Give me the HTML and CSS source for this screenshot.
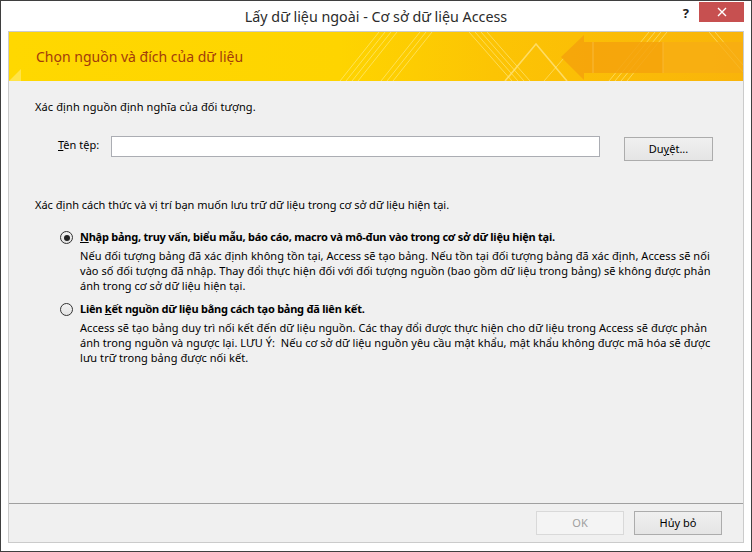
FILE: index.html
```html
<!DOCTYPE html>
<html lang="vi">
<head>
<meta charset="utf-8">
<title>Lấy dữ liệu ngoài - Cơ sở dữ liệu Access</title>
<link rel="stylesheet" href="styles.css">
</head>
<body>
<div class="window">
  <div class="titlebar">
    <div class="title">Lấy dữ liệu ngoài - Cơ sở dữ liệu Access</div>
    <div class="controls">
      <span class="help">?</span>
      <span class="close">
        <svg width="10" height="10" viewBox="0 0 10 10"><path d="M1 1 L9 9 M9 1 L1 9" stroke="#fff" stroke-width="1.4" fill="none"/></svg>
      </span>
    </div>
  </div>
  <div class="frame">
    <div class="banner">
      <svg class="banner-art" viewBox="0 0 734 49" preserveAspectRatio="none" aria-hidden="true">
        <defs>
          <linearGradient id="bg" x1="0" y1="0" x2="1" y2="0">
            <stop offset="0" stop-color="#ffd800"/>
            <stop offset="0.45" stop-color="#fed400"/>
            <stop offset="0.66" stop-color="#fcc404"/>
            <stop offset="1" stop-color="#f9b40a"/>
          </linearGradient>
        </defs>
        <rect x="0" y="0" width="734" height="49" fill="url(#bg)"/>
        <path d="M0 49 L12 37 L12 49 Z" fill="#ffe966" opacity="0.7"/>
        <g stroke="#fff3a6" stroke-width="1" opacity="0.5" fill="none">
          <path d="M331 49 L370 0"/>
          <path d="M337 49 L376 0"/>
          <path d="M343 49 L382 0"/>
          <path d="M349 49 L388 0"/>
          <path d="M372 49 L411 0"/>
          <path d="M378 49 L417 0"/>
          <path d="M384 49 L423 0"/>
          <path d="M460 0 L503 49"/>
          <path d="M466 0 L509 49"/>
          <path d="M472 0 L515 49"/>
          <path d="M478 0 L521 49"/>
          <path d="M600 49 L640 0"/>
          <path d="M606 49 L646 0"/>
          <path d="M612 49 L652 0"/>
          <path d="M618 49 L658 0"/>
          <path d="M700 0 L734 40"/>
          <path d="M706 0 L734 33"/>
        </g>
        <path d="M496 49 L527 12 L558 49" stroke="#ffe27a" stroke-width="1.6" fill="none" opacity="0.8"/>
        <path d="M535 49 L555 26" stroke="#fff0a0" stroke-width="1" fill="none" opacity="0.5"/>
        <polygon points="552,25 575,3 575,10 654,10 654,41 575,41 575,48" fill="#f4a20c" opacity="0.85"/>
        <polygon points="654,10 734,10 734,41 654,41" fill="#f7ac14" opacity="0.75"/>
        <path d="M584 10 L584 41" stroke="#f9b834" stroke-width="1.2"/>
        <path d="M654 10 L654 41" stroke="#f9b834" stroke-width="1"/>
      </svg>
      <h1 class="banner-title">Chọn nguồn và đích của dữ liệu</h1>
    </div>
    <div class="main">
      <p class="line intro">Xác định nguồn định nghĩa của đối tượng.</p>
      <div class="file-row">
        <label class="file-label"><u>T</u>ên tệp:</label>
        <div class="file-input"></div>
        <button class="btn browse">Du<u>y</u>ệt...</button>
      </div>
      <p class="line intro2">Xác định cách thức và vị trí bạn muốn lưu trữ dữ liệu trong cơ sở dữ liệu hiện tại.</p>
      <div class="option first">
        <span class="radio checked"><span class="dot"></span></span>
        <div class="option-body">
          <div class="option-label"><u>N</u>hập bảng, truy vấn, biểu mẫu, báo cáo, macro và mô-đun vào trong cơ sở dữ liệu hiện tại.</div>
          <div class="option-desc">Nếu đối tượng bảng đã xác định không tồn tại, Access sẽ tạo bảng. Nếu tồn tại đối tượng bảng đã xác định, Access sẽ nối<br>vào số đối tượng đã nhập. Thay đổi thực hiện đối với đối tượng nguồn (bao gồm dữ liệu trong bảng) sẽ không được phản<br>ánh trong cơ sở dữ liệu hiện tại.</div>
        </div>
      </div>
      <div class="option second">
        <span class="radio"></span>
        <div class="option-body">
          <div class="option-label">Liên <u>k</u>ết nguồn dữ liệu bằng cách tạo bảng đã liên kết.</div>
          <div class="option-desc">Access sẽ tạo bảng duy trì nối kết đến dữ liệu nguồn. Các thay đổi được thực hiện cho dữ liệu trong Access sẽ được phản<br>ánh trong nguồn và ngược lại. LƯU Ý:&nbsp; Nếu cơ sở dữ liệu nguồn yêu cầu mật khẩu, mật khẩu không được mã hóa sẽ được<br>lưu trữ trong bảng được nối kết.</div>
        </div>
      </div>
    </div>
    <div class="footer">
      <button class="btn disabled">OK</button>
      <button class="btn">Hủy bỏ</button>
    </div>
  </div>
</div>
</body>
</html>
```
FILE: styles.css
```css
html, body {
  margin: 0;
  padding: 0;
  background: #fff;
}
body {
  font-family: "Noto Sans", "Open Sans", sans-serif;
  color: #000;
}
.window {
  width: 752px;
  height: 552px;
  box-sizing: border-box;
  border: 1px solid #3f3f3f;
  background: #fff;
  display: flex;
  flex-direction: column;
}
.titlebar {
  height: 30px;
  flex: none;
  display: grid;
  grid-template-columns: 1fr auto 1fr;
  align-items: start;
}
.title {
  grid-column: 2;
  font-size: 14.3px;
  line-height: 20px;
  padding-top: 6px;
  color: #2b2b2b;
  white-space: nowrap;
}
.controls {
  grid-column: 3;
  justify-self: end;
  display: flex;
  align-items: flex-start;
  padding-right: 7px;
}
.help {
  font-size: 13px;
  font-weight: 700;
  line-height: 16px;
  margin-top: 4px;
  margin-right: 10px;
  color: #222;
}
.close {
  width: 45px;
  height: 20px;
  margin-top: 1px;
  background: #c75050;
  display: flex;
  align-items: center;
  justify-content: center;
}
.frame {
  flex: 1;
  margin: 0 7px 8px;
  border: 1px solid #cbcbcb;
  display: flex;
  flex-direction: column;
  background: #f0f0f0;
}
.banner {
  height: 49px;
  flex: none;
  position: relative;
  display: flex;
  align-items: center;
  padding-left: 27px;
  overflow: hidden;
}
.banner-art {
  position: absolute;
  left: 0;
  top: 0;
  width: 100%;
  height: 100%;
}
.banner-title {
  position: relative;
  margin: 0;
  font-size: 14px;
  font-weight: 400;
  color: #a33c0c;
  line-height: 20px;
  padding-top: 1px;
}
.main {
  flex: 1;
  padding: 18px 0 0 26px;
  border-bottom: 1px solid #a0a0a0;
  font-size: 11px;
}
.line {
  margin: 0;
  line-height: 16px;
  white-space: nowrap;
}
.intro {
  letter-spacing: 0.1px;
}
.file-row {
  display: flex;
  align-items: flex-start;
  margin-top: 21px;
}
.file-label {
  width: 53px;
  margin-left: 23px;
  line-height: 16px;
  margin-top: 1px;
}
.file-input {
  width: 489px;
  height: 21px;
  box-sizing: border-box;
  border: 1px solid #abadb3;
  background: #fff;
}
.btn {
  font-family: "Noto Sans", "Open Sans", sans-serif;
  font-size: 11px;
  color: #000;
  width: 89px;
  height: 24px;
  box-sizing: border-box;
  border: 1px solid #acacac;
  background: linear-gradient(#f0f0f0, #e5e5e5);
  padding: 0;
  line-height: 20px;
}
.browse {
  margin-left: 24px;
  margin-top: 1px;
}
.intro2 {
  margin-top: 36px;
}
.option {
  display: grid;
  grid-template-columns: 13px 1fr;
  column-gap: 7px;
  margin-left: 25px;
}
.option.first {
  margin-top: 16px;
}
.option.second {
  margin-top: 8px;
}
.radio {
  width: 13px;
  height: 13px;
  box-sizing: border-box;
  border: 1px solid #333;
  border-radius: 50%;
  background: linear-gradient(#f4f4f4, #e2e2e2);
  margin-top: 2px;
  display: flex;
  align-items: center;
  justify-content: center;
}
.dot {
  width: 6px;
  height: 6px;
  border-radius: 50%;
  background: #222;
}
.option-label {
  font-weight: 700;
  line-height: 16px;
  white-space: nowrap;
  letter-spacing: -0.24px;
}
.option-desc {
  margin-top: 3px;
  line-height: 15px;
  white-space: nowrap;
  letter-spacing: 0.05px;
}
.footer {
  height: 38px;
  flex: none;
  box-sizing: border-box;
  display: flex;
  justify-content: flex-end;
  align-items: flex-start;
  padding: 7px 21px 0 0;
  gap: 10px;
}
.footer .btn {
  width: 88px;
}
.btn.disabled {
  color: #a0a0a0;
  border-color: #d9d9d9;
  background: #f4f4f4;
}
```
